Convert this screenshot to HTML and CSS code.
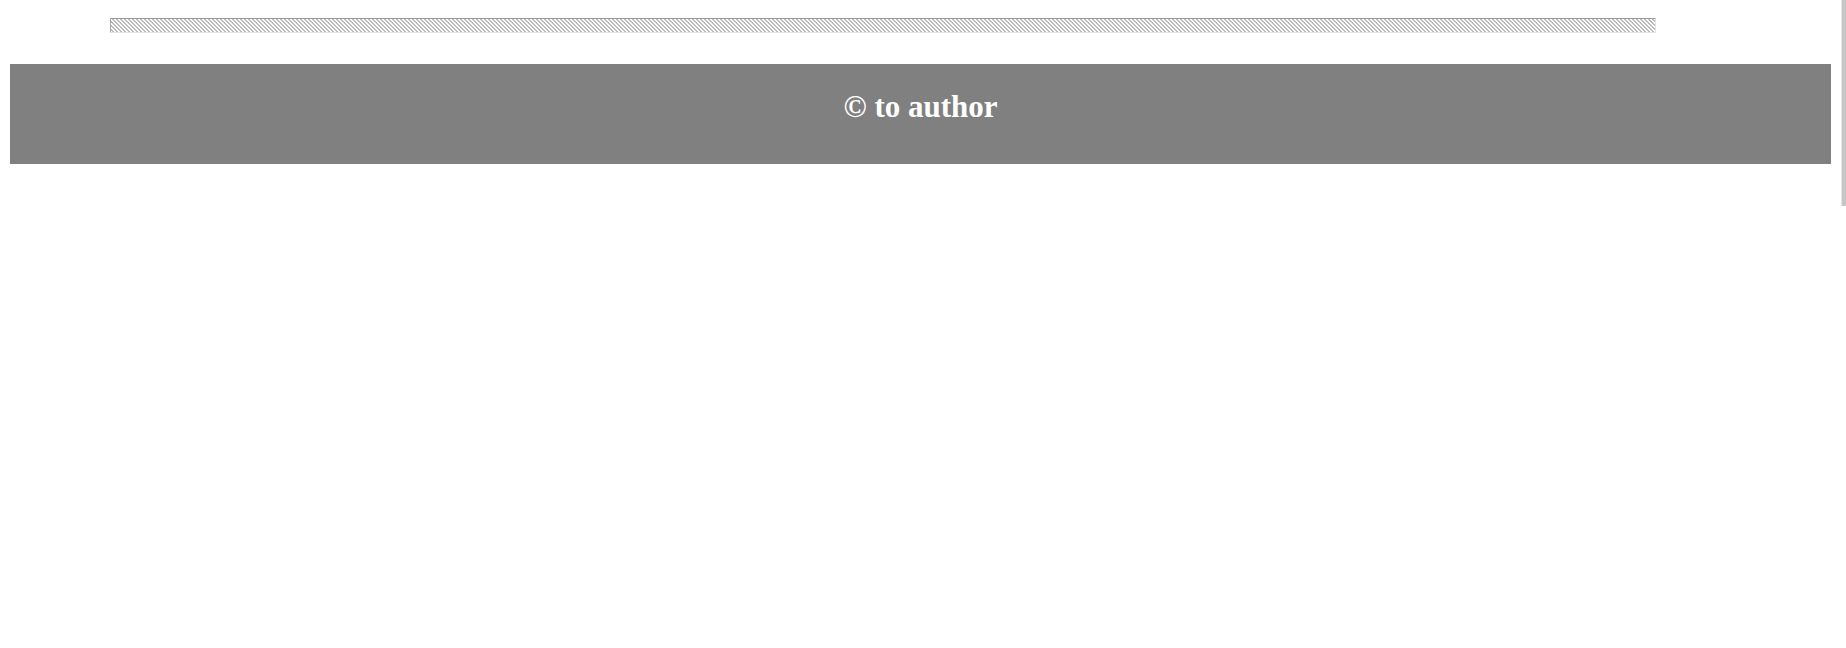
FILE: index.html
```html
<!DOCTYPE html>
<html>
<head>
<meta charset="utf-8">
<link rel="stylesheet" href="styles.css">
</head>
<body>
<div class="page">
  <div class="hatch"></div>
  <footer class="footer">
    <h1 class="footer-text">© to author</h1>
  </footer>
</div>
<div class="scroll-thumb"></div>
</body>
</html>
```
FILE: styles.css
```css
html, body {
  margin: 0;
  padding: 0;
  background: #ffffff;
}
.page {
  padding: 18px 15px 0 10px;
  font-family: "Liberation Serif", "Times New Roman", serif;
}
.hatch {
  margin-left: 100px;
  width: 1544px;
  height: 13px;
  border-top: 1px solid #9a9a9a;
  border-left: 1px solid #a8a8a8;
  border-bottom: 1px solid #e4e4e4;
  border-right: 1px solid #e4e4e4;
  background-color: #ffffff;
  background-image: linear-gradient(45deg, #bababa 0 25%, #ffffff 25% 50%, #bababa 50% 75%, #ffffff 75% 100%);
  background-size: 4px 4px;
}
.footer {
  margin-top: 31px;
  height: 100px;
  background: #808080;
  display: flex;
  align-items: flex-start;
  justify-content: center;
  box-sizing: border-box;
  padding-top: 27px;
}
.footer-text {
  margin: 0;
  color: #ffffff;
  font-weight: bold;
  font-size: 31px;
  line-height: 1;
}
.scroll-thumb {
  position: fixed;
  top: 0;
  right: 0;
  width: 4px;
  height: 206px;
  background: #c6c6c6;
  border-left: 1px solid #e6e6e6;
}
```
